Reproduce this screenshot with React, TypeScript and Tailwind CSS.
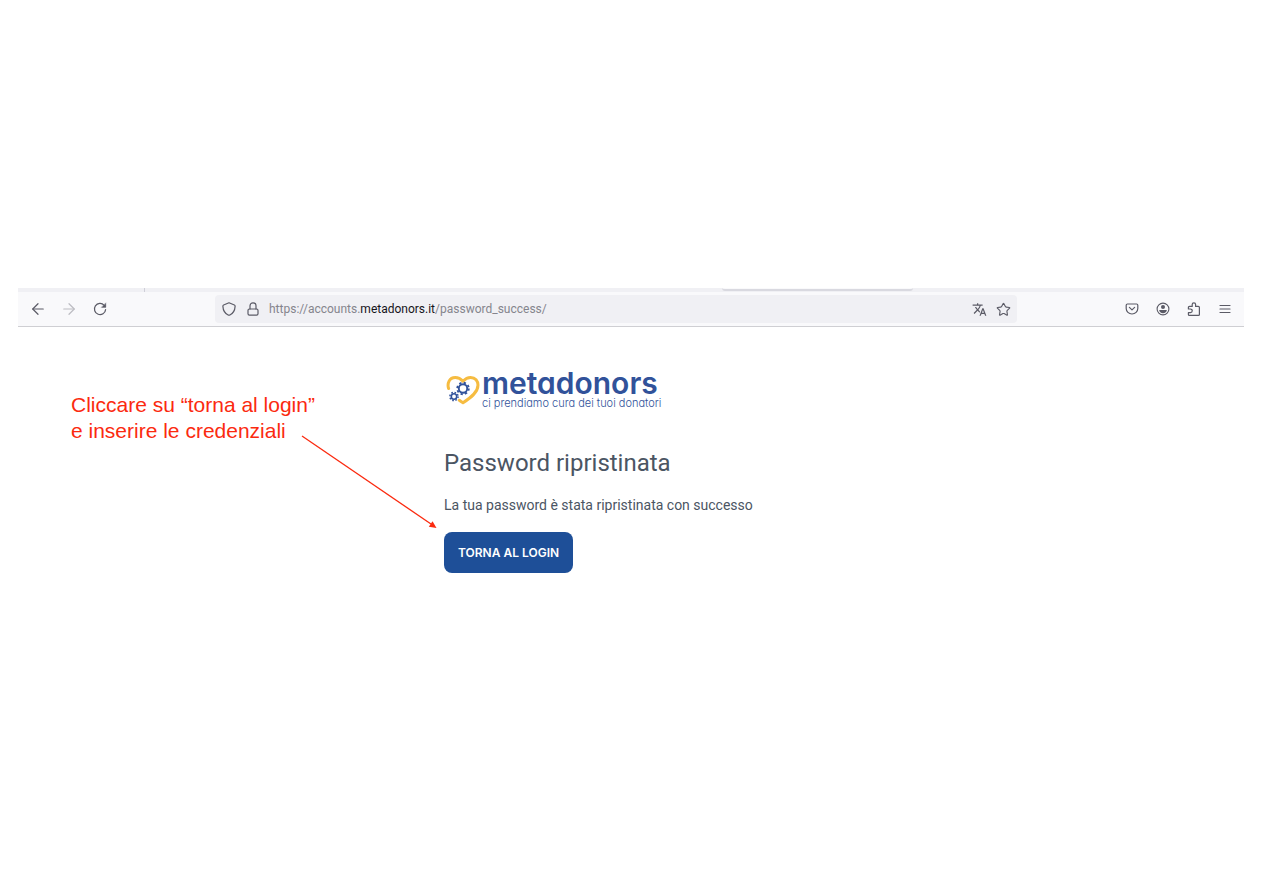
import React from 'react';
import { ArrowLeft, ArrowRight, Star } from 'lucide-react';
import { MdTranslate } from 'react-icons/md';

interface IconButtonProps {
    label:     string;
    disabled?: boolean;
    children:  React.ReactNode;
}

function IconButton({ label, disabled, children }: IconButtonProps) {
    return (
        <button
            type="button"
            aria-label={label}
            disabled={disabled}
            className="flex size-4 shrink-0 items-center justify-center text-[#5b5b66] disabled:text-[#bcbcc2]"
        >
            {children}
        </button>
    );
}

/* ---------- Toolbar icons ---------- */
const stroke = { fill: 'none', stroke: 'currentColor', strokeLinecap: 'round', strokeLinejoin: 'round' } as const;

function ReloadIcon() {
    return (
        <svg width="14" height="14" viewBox="0 0 14 14" {...stroke} strokeWidth="1.2">
            <path d="M12.6 7.6A5.6 5.6 0 1 1 11.2 3.3L12.2 4.2" />
            <path d="M12.8 1.2v4.2H8.6z" fill="currentColor" strokeWidth="0.4" />
        </svg>
    );
}

function ShieldIcon() {
    return (
        <svg width="14" height="14" viewBox="0 0 14 14" {...stroke} strokeWidth="1.2">
            <path d="M7 .8 12.4 3c.6.3.8.7.7 1.4-.2 3.8-2 7-5.2 8.6-.6.3-1.2.3-1.8 0C2.9 11.4 1.1 8.2.9 4.4.8 3.7 1 3.3 1.6 3z" />
        </svg>
    );
}

function LockIcon() {
    return (
        <svg width="12" height="14" viewBox="0 0 12 14" {...stroke} strokeWidth="1.2">
            <rect x="1" y="7" width="10" height="6.2" rx="1.4" />
            <path d="M3 7V3.8a3 3 0 0 1 6 0V7" />
        </svg>
    );
}

function PocketIcon() {
    return (
        <svg width="14" height="14" viewBox="0 0 14 14" {...stroke} strokeWidth="1.2">
            <path d="M2.4 2h9.2c.7 0 1.2.5 1.2 1.2V6.6a5.8 5.4 0 0 1-11.6 0V3.2C1.2 2.5 1.7 2 2.4 2z" />
            <path d="M4.4 5.4 7 7.9l2.6-2.5" />
        </svg>
    );
}

function AccountIcon() {
    return (
        <svg width="14" height="14" viewBox="0 0 14 14" fill="none">
            <circle cx="7" cy="7" r="5.9" stroke="currentColor" strokeWidth="1.1" />
            <circle cx="7" cy="5" r="2" fill="currentColor" />
            <path d="M3.2 8h7.6c0 1.9-1.7 3.2-3.8 3.2S3.2 9.9 3.2 8z" fill="currentColor" />
        </svg>
    );
}

function ExtensionsIcon() {
    return (
        <svg width="14" height="15" viewBox="0 0 14 15" {...stroke} strokeWidth="1.2">
            <path d="M1.4 7V5.5c0-.7.4-1.1 1.1-1.1h2.7V2.5a1.7 1.7 0 0 1 3.4 0v1.9h2.7c.7 0 1.1.4 1.1 1.1v6.9c0 .6-.4 1-1 1H2.4c-.6 0-1-.4-1-1v-1.7h2a1.7 1.7 0 0 0 0-3.7z" />
        </svg>
    );
}

function MenuIcon() {
    return (
        <svg width="14" height="14" viewBox="0 0 14 14" {...stroke} strokeWidth="1.2">
            <path d="M2 3.5h10M2 7h10M2 10.5h10" />
        </svg>
    );
}

/* ---------- Brand ---------- */
function HeartGears() {
    return (
        <svg width="34" height="32" viewBox="0 0 34 32" fill="none" aria-hidden="true">
            <path
                d="M2.6 14.5C1 9.5 3.2 3.4 9.3 3.4c3.3 0 5.6 1.5 7.7 3.8 2.1-2.3 4.3-3.8 7.6-3.8 4.8 0 7.4 3.9 7.4 7.7 0 7.6-8.2 13.3-15 17.7-1.3-.8-2.5-1.6-3.7-2.5"
                stroke="#f6bc41" strokeWidth="3" strokeLinecap="round" strokeLinejoin="round"
            />
            <g stroke="#31529a">
                <circle cx="17" cy="14.5" r="4.2" strokeWidth="1.9" />
                <circle cx="17" cy="14.5" r="5.8" strokeWidth="1.8" strokeDasharray="2.278 2.277" />
                <circle cx="8" cy="22.5" r="2.7" strokeWidth="1.6" />
                <circle cx="8" cy="22.5" r="4.1" strokeWidth="1.5" strokeDasharray="1.61 1.61" />
            </g>
        </svg>
    );
}

function Logo() {
    return (
        <div className="flex items-start gap-0.5 pl-0.5 text-[#31529a]">
            <div className="pt-[5px]">
                <HeartGears />
            </div>
            <div className="whitespace-nowrap [font-feature-settings:'cv11']">
                <div className="text-[30px] leading-7 font-semibold">metadonors</div>
                <div className="text-[11px] leading-3 font-light">ci prendiamo cura dei tuoi donatori</div>
            </div>
        </div>
    );
}

/* ---------- Browser chrome ---------- */
function BrowserBar() {
    return (
        <header className="mx-[18px]">
            <div className="flex h-1 bg-[#f0f0f4]">
                <div className="w-[127px] border-r border-[#cfcfd8]" />
                <div className="ml-[577px] h-[3px] w-[191px] rounded-b border-b-2 border-[#d9d9e0] bg-[#f9f9fb]" />
            </div>
            <div className="flex items-center border-b border-[#cfcfd3] bg-[#f9f9fb] py-[3px]">
                <nav className="flex w-[197px] shrink-0 gap-[15px] pl-3">
                    <IconButton label="Indietro"><ArrowLeft size={18} strokeWidth={1.6} className="shrink-0" /></IconButton>
                    <IconButton label="Avanti" disabled><ArrowRight size={18} strokeWidth={1.6} className="shrink-0" /></IconButton>
                    <IconButton label="Ricarica"><ReloadIcon /></IconButton>
                </nav>
                <div className="flex h-7 min-w-0 flex-1 items-center gap-2 rounded bg-[#f0f0f4] px-1.5">
                    <IconButton label="Protezione"><ShieldIcon /></IconButton>
                    <IconButton label="Sicurezza"><LockIcon /></IconButton>
                    <div
                        role="textbox"
                        aria-label="Indirizzo"
                        className="min-w-0 flex-1 truncate font-['Roboto',sans-serif] text-xs text-[#85858d]"
                    >
                        https://accounts.<span className="text-[#15141a]">metadonors.it</span>/password_success/
                    </div>
                    <IconButton label="Traduci"><MdTranslate size={15} /></IconButton>
                    <IconButton label="Preferiti"><Star size={15} strokeWidth={1.8} /></IconButton>
                </div>
                <div className="flex w-[227px] shrink-0 justify-end gap-[15px] pr-[11px]">
                    <IconButton label="Pocket"><PocketIcon /></IconButton>
                    <IconButton label="Account"><AccountIcon /></IconButton>
                    <IconButton label="Estensioni"><ExtensionsIcon /></IconButton>
                    <IconButton label="Menu"><MenuIcon /></IconButton>
                </div>
            </div>
        </header>
    );
}

/* ---------- Red note with its arrow ---------- */
function Annotation() {
    return (
        <aside className="relative w-[444px] shrink-0 pt-[65px] pl-[71px]">
            <p className="font-['Liberation_Sans',sans-serif] text-[21px] leading-[26px] whitespace-nowrap text-[#fb2a0f]">
                Cliccare su “torna al login”
                <br />
                e inserire le credenziali
            </p>
            <svg
                className="absolute top-[108px] left-[301px]"
                width="136" height="94" viewBox="0 0 136 94" aria-hidden="true"
            >
                <path d="M1 1 130 89" stroke="#fb2a0f" strokeWidth="1.3" fill="none" />
                <path d="M135.5 93 127.8 91.7 131.5 86.2z" fill="#fb2a0f" />
            </svg>
        </aside>
    );
}

export default function App() {
    return (
        <div className="min-h-screen bg-white pt-72 font-['Inter',sans-serif]">
            <BrowserBar />
            <div className="flex">
                <Annotation />
                <main className="pt-[42px] text-[#4b5563]">
                    <Logo />
                    <h1 className="mt-9 font-['Roboto',sans-serif] text-2xl leading-9">Password ripristinata</h1>
                    <p className="mt-3 font-['Roboto',sans-serif] text-sm leading-6">
                        La tua password è stata ripristinata con successo
                    </p>
                    <button
                        type="button"
                        className="mt-[15px] h-[41px] rounded-lg bg-[#1e4f98] px-3.5 text-xs font-semibold text-white"
                    >
                        TORNA AL LOGIN
                    </button>
                </main>
            </div>
        </div>
    );
}
